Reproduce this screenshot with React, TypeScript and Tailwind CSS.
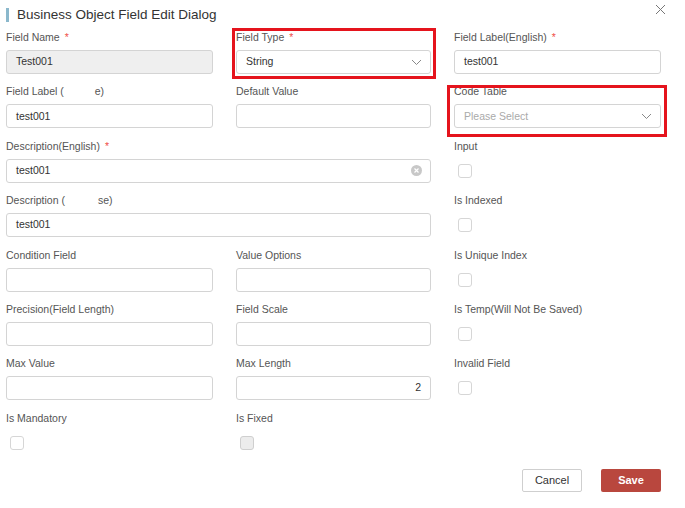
import React from "react";

const font = { fontFamily: '"Liberation Sans", Arial, sans-serif' };

function Label({ text, required, children }: { text?: string; required?: boolean; children?: React.ReactNode }) {
  return (
    <div className="h-[20px] leading-[20px] text-[10.5px] text-[#555] whitespace-nowrap">
      {children ?? text}
      {required && <span className="ml-[5px] text-[#f0504a]">*</span>}
    </div>
  );
}

function TextInput({ value, disabled, right }: { value?: string; disabled?: boolean; right?: boolean }) {
  return (
    <div
      className={`mt-[3px] h-[24px] rounded-[3px] border border-[#d4d4d4] px-[9px] flex items-center text-[10.5px] text-[#333] ${
        disabled ? "bg-[#efefef]" : "bg-white"
      } ${right ? "justify-end" : ""}`}
    >
      {value}
    </div>
  );
}

function Chevron() {
  return (
    <svg width="11" height="7" viewBox="0 0 11 7" className="shrink-0">
      <path d="M1 1l4.5 4.5L10 1" fill="none" stroke="#888" strokeWidth="1" />
    </svg>
  );
}

function SelectInput({ value, placeholder }: { value?: string; placeholder?: string }) {
  return (
    <div className="mt-[3px] h-[24px] rounded-[3px] border border-[#d4d4d4] bg-white pl-[9px] pr-[8px] flex items-center justify-between text-[10.5px]">
      <span className={value ? "text-[#333]" : "text-[#aaa]"}>{value ?? placeholder}</span>
      <Chevron />
    </div>
  );
}

function Checkbox({ disabled }: { disabled?: boolean }) {
  return (
    <div className="mt-[3px] h-[24px] flex items-center pl-[4px]">
      <div
        className={`w-[14px] h-[14px] rounded-[3px] border ${
          disabled ? "border-[#cfcfcf] bg-[#ececec]" : "border-[#d6d6d6] bg-white"
        }`}
      />
    </div>
  );
}

function Field({ label, required, children, wide }: { label: React.ReactNode; required?: boolean; children: React.ReactNode; wide?: boolean }) {
  return (
    <div className={wide ? "col-span-2" : ""}>
      <Label required={required}>{label}</Label>
      {children}
    </div>
  );
}

export default function App() {
  return (
    <div className="relative w-[685px] h-[508px] bg-white overflow-hidden" style={font}>
      {/* header */}
      <div className="h-[27px] pt-[8px] pl-[6px] flex items-start">
        <div className="w-[3px] h-[14px] bg-[#8bb8cc]" />
        <div className="ml-[8px] text-[13.5px] leading-[14px] text-[#333]">Business Object Field Edit Dialog</div>
      </div>
      <button className="absolute left-[655px] top-[4px] w-[11px] h-[11px]">
        <svg width="11" height="11" viewBox="0 0 11 11">
          <path d="M1 1l9 9M10 1l-9 9" stroke="#777" strokeWidth="1" />
        </svg>
      </button>

      {/* form */}
      <div className="pl-[6px] grid grid-cols-[207px_195px_207px] gap-x-[23px] gap-y-[7.4px]">
        <Field label="Field Name" required>
          <TextInput value="Test001" disabled />
        </Field>
        <Field label="Field Type" required>
          <SelectInput value="String" />
        </Field>
        <Field label="Field Label(English)" required>
          <TextInput value="test001" />
        </Field>

        <Field
          label={
            <>
              Field Label (<span className="inline-block w-[31px]" />e)
            </>
          }
        >
          <TextInput value="test001" />
        </Field>
        <Field label="Default Value">
          <TextInput />
        </Field>
        <Field label="Code Table">
          <SelectInput placeholder="Please Select" />
        </Field>

        <Field label="Description(English)" required wide>
          <div className="mt-[3px] h-[24px] rounded-[3px] border border-[#d4d4d4] bg-white pl-[9px] pr-[8px] flex items-center justify-between text-[10.5px] text-[#333]">
            <span>test001</span>
            <svg width="11" height="11" viewBox="0 0 11 11">
              <circle cx="5.5" cy="5.5" r="5.5" fill="#c8c8c8" />
              <path d="M3.5 3.5l4 4M7.5 3.5l-4 4" stroke="#fff" strokeWidth="1.2" />
            </svg>
          </div>
        </Field>
        <Field label="Input">
          <Checkbox />
        </Field>

        <Field
          wide
          label={
            <>
              Description (<span className="inline-block w-[33px]" />se)
            </>
          }
        >
          <TextInput value="test001" />
        </Field>
        <Field label="Is Indexed">
          <Checkbox />
        </Field>

        <Field label="Condition Field">
          <TextInput />
        </Field>
        <Field label="Value Options">
          <TextInput />
        </Field>
        <Field label="Is Unique Index">
          <Checkbox />
        </Field>

        <Field label="Precision(Field Length)">
          <TextInput />
        </Field>
        <Field label="Field Scale">
          <TextInput />
        </Field>
        <Field label="Is Temp(Will Not Be Saved)">
          <Checkbox />
        </Field>

        <Field label="Max Value">
          <TextInput />
        </Field>
        <Field label="Max Length">
          <TextInput value="2" right />
        </Field>
        <Field label="Invalid Field">
          <Checkbox />
        </Field>

        <Field label="Is Mandatory">
          <Checkbox />
        </Field>
        <Field label="Is Fixed">
          <Checkbox disabled />
        </Field>
        <div />
      </div>

      {/* footer */}
      <div className="mt-[14px] pr-[24px] flex justify-end gap-[19px]">
        <button className="w-[60px] h-[23px] rounded-[2px] border border-[#cfcfcf] bg-white text-[11px] text-[#333]">
          Cancel
        </button>
        <button className="w-[60px] h-[23px] rounded-[2px] bg-[#b9473e] text-[11px] font-bold text-white">Save</button>
      </div>

      {/* highlight annotations */}
      <div className="absolute left-[232px] top-[28px] w-[204px] h-[51px] border-[3px] border-[#e5141d] pointer-events-none" />
      <div className="absolute left-[447px] top-[85px] w-[220px] h-[52px] border-[3px] border-[#e5141d] pointer-events-none" />
    </div>
  );
}
